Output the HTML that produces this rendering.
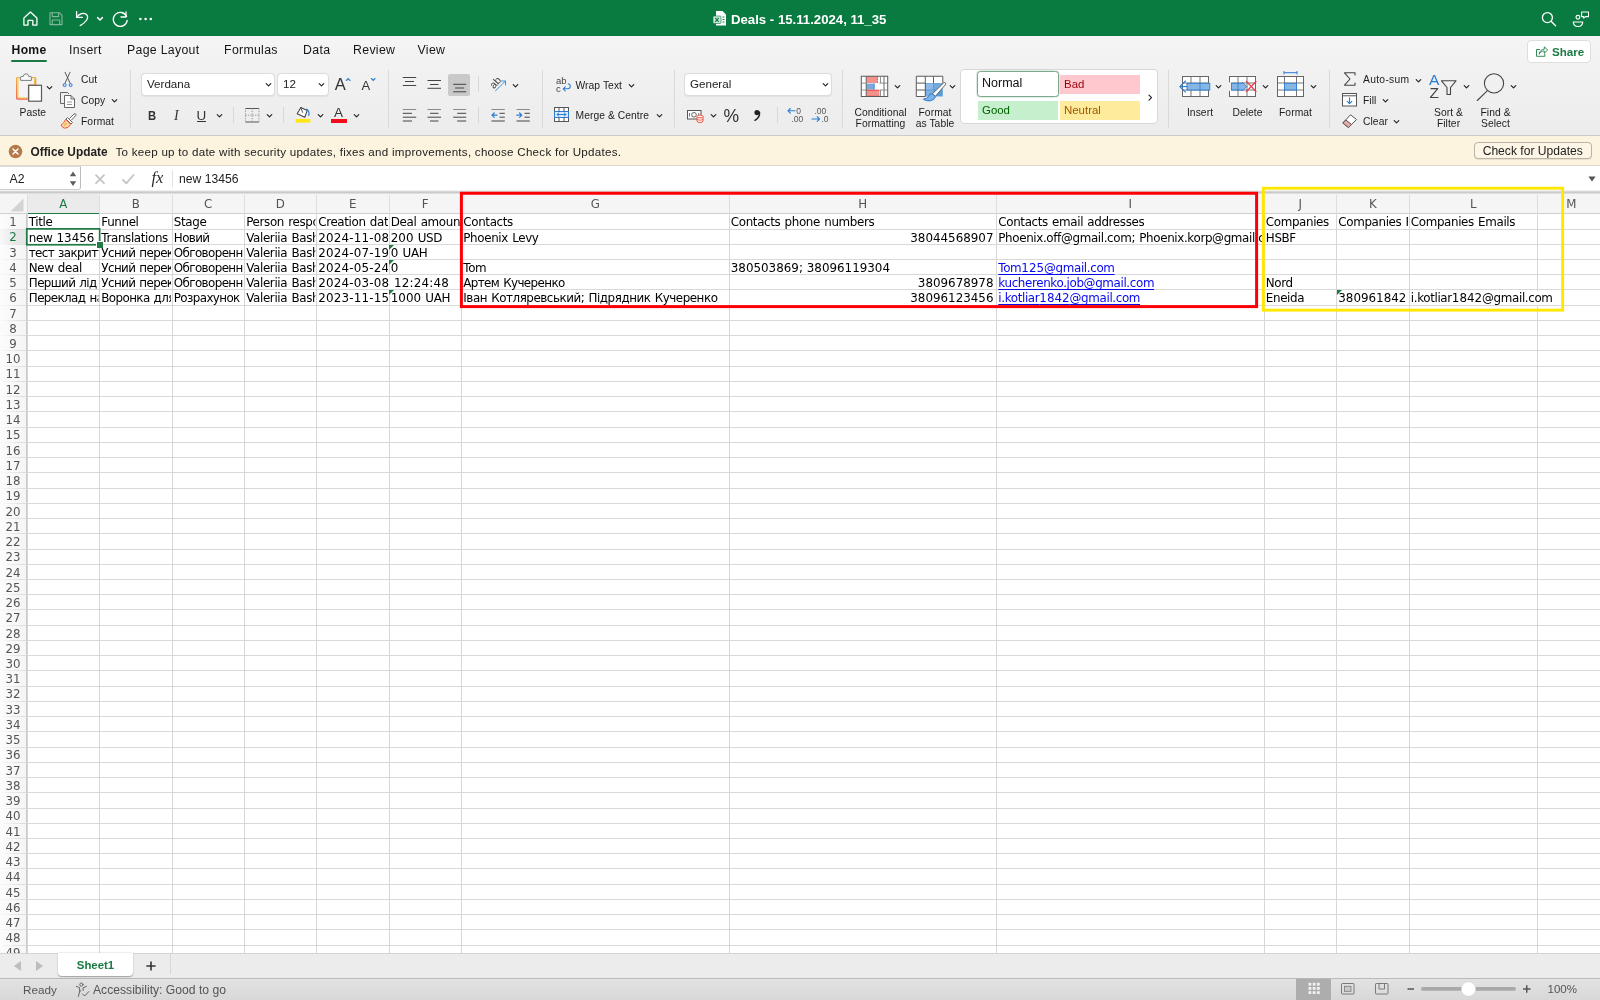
<!DOCTYPE html>
<html lang="en"><head><meta charset="utf-8"><title>Deals - 15.11.2024, 11_35</title>
<style>
*{box-sizing:border-box;margin:0;padding:0}
html,body{width:1600px;height:1000px;overflow:hidden;background:#fff}
body{will-change:transform;position:relative;font-family:"Liberation Sans",sans-serif;font-size:12.15px;color:#222;-webkit-font-smoothing:antialiased}
.abs{position:absolute}
#title{position:absolute;left:0;top:0;width:1600px;height:36px;background:#0a7b40}
#title .t{position:absolute;left:731px;top:11.600px;font-weight:bold;font-size:13.2px;color:#fff;white-space:nowrap;line-height:16px}
#tabs{position:absolute;left:0;top:36px;width:1600px;height:28px;background:linear-gradient(#f5f5f5,#f2f2f2)}
#tabs .tb{position:absolute;top:6px;margin-left:.6px;font-size:12.3px;letter-spacing:.3px;line-height:16px;color:#151515;white-space:nowrap}
#tabs .tb.on{font-weight:bold;font-size:12.2px;letter-spacing:.25px}
#ribbon{position:absolute;left:0;top:64px;width:1600px;height:72px;background:linear-gradient(#f2f2f2,#ececec);border-bottom:1px solid #c9cbce}
#rb .lb{position:absolute;white-space:nowrap;font-size:10.3px;letter-spacing:.06px;line-height:13px;color:#1d1d1d}
#rb{position:absolute;left:0;top:0;width:1600px;height:136px}
#rb .sep{position:absolute;top:70px;width:1px;height:57.500px;background:#dadada}
#rb .lb.c{width:100px;text-align:center}
#rb .lb.as{letter-spacing:.3px}
#rb .sty{font-size:12.500px;padding-left:4px;white-space:nowrap}
#rb .ssep{position:absolute;width:1px;height:16px;background:#d8d8d8}
.combo{position:absolute;background:#fff;border:1px solid #dcdcdc;border-radius:4px;font-size:11.600px;line-height:19.500px;padding-left:5px;color:#1d1d1d;box-shadow:0 0.5px 1px rgba(0,0,0,.06)}
.chev{position:absolute;width:8px;height:5px}
#upd{position:absolute;left:0;top:136px;width:1600px;height:29.5px;background:#fcf4df;border-bottom:1px solid #ddd8cb}
#upd .t1{position:absolute;left:30.5px;top:8.5px;font-weight:bold;font-size:11.85px;line-height:14px;color:#222;white-space:nowrap;-webkit-text-stroke:0}
#upd .t2{position:absolute;left:115.5px;top:8.5px;font-size:11.6px;line-height:14px;color:#222;white-space:nowrap;letter-spacing:0.26px}
#upd .btn{position:absolute;left:1473.5px;top:5.7px;width:118.5px;height:17px;border:1px solid #b9b4a6;border-radius:4px;background:#fdf6e6;font-size:12.1px;line-height:16px;text-align:center;color:#222;box-shadow:0 0.5px 0.5px rgba(0,0,0,.15)}
#fbar{position:absolute;left:0;top:165.5px;width:1600px;height:25.5px;background:#fff}
#fbar .nb{position:absolute;left:-1px;top:0;width:82px;height:24.5px;border:1px solid #d9d9d9;border-right:1.5px solid #bdbdbd;border-bottom:1px solid #cfcfcf;border-radius:0 0 3px 0}
#fbar .nbt{position:absolute;left:9.5px;top:6.2px;font-size:12.3px;line-height:14px;color:#222}
#fbar .fx{position:absolute;left:151.5px;top:3.3px;font-family:"Liberation Serif",serif;font-style:italic;font-size:16.5px;line-height:18px;color:#2a2a2a}
#fbar .ft{position:absolute;left:179px;top:6.2px;font-size:12.15px;line-height:14px;color:#222;white-space:nowrap}
#fgap{position:absolute;left:0;top:190px;width:1600px;height:4px;background:linear-gradient(#fff,#dedede 30%,#c6c6c6 55%,#d4d4d4 80%,#f0f0f0)}
#grid{position:absolute;left:0;top:0;width:1600px;height:953px;overflow:hidden;pointer-events:none}
#grid .colhdr{position:absolute;left:0;top:194px;width:1600px;height:19.5px;background:#f5f5f5;border-bottom:1px solid #cfcfcf}
#grid .colsel{position:absolute;top:194px;height:20px;background:#ebebeb;border-bottom:1.5px solid #1f7a45}
#grid .rowhdr{position:absolute;left:0;top:213.8px;width:27px;height:740px;background:linear-gradient(90deg,#fcfcfc,#f5f5f5);border-right:1px solid #c9c9c9}
#grid .rowsel{position:absolute;left:0;width:27px;background:linear-gradient(90deg,#f8f8f8,#e6e6e6 60%)}
#grid .corner{position:absolute;left:0;top:194px}
#grid .hl{position:absolute;left:27px;width:1573px;height:1px;background:#d9d9d9}
#grid .hr{position:absolute;left:0;width:27px;height:1px;background:linear-gradient(90deg,rgba(217,217,217,0),#d9d9d9)}
#grid .vl{position:absolute;top:213.5px;width:1px;height:740px;background:#d6d6d6}
#grid .vh{position:absolute;top:195px;width:1px;height:18.5px;background:#dedede}
#grid .cl{position:absolute;top:196.5px;height:15px;text-align:center;font-family:"DejaVu Sans",sans-serif;font-size:11.8px;line-height:15px;color:#555}
#grid .cl.sel{color:#1b7a43}
#grid .rn{position:absolute;left:0;width:27px;height:15.25px;text-align:center;font-family:"DejaVu Sans",sans-serif;font-size:11.8px;line-height:15.6px;color:#555;padding-right:1px}
#grid .rn.sel{color:#1b7a43}
#grid .c{position:absolute;height:15.2px;clip-path:inset(-4px 0 -4px 0);white-space:nowrap;font-family:"DejaVu Sans",sans-serif;font-size:11.9px;line-height:15.6px;color:#000;letter-spacing:-0.36px;word-spacing:.8px;padding-left:1.8px}
#grid .c b{font-weight:normal;letter-spacing:0}
#grid .c.d,#grid .c.d b{letter-spacing:.2px}
#grid .c.k{letter-spacing:-.6px}
#grid .c.k2{letter-spacing:-.45px}
#grid .c.r{text-align:right;padding-right:2px;letter-spacing:0}
#grid .c.a{color:#0808ee}
#grid .c.a span{text-decoration:underline;text-underline-offset:1.5px}
#grid .patch{position:absolute;width:2px;background:#fff}
#grid .tri{position:absolute;width:0;height:0;margin:.3px 0 0 .3px;border-top:5.5px solid #1f7a45;border-right:5.5px solid transparent}
#grid .selbox{position:absolute;border:1.7px solid #1f7a45}
#grid .selh{position:absolute;width:6.8px;height:6.5px;background:#1f7a45;border:1px solid #fff;border-right:0;border-bottom:0}
#grid .boxes{position:absolute;left:0;top:0}
#sheets{position:absolute;left:0;top:953px;width:1600px;height:25px;background:#ececec;border-top:1px solid #d4d4d4}
#sheets .tab{position:absolute;left:58px;top:-1px;width:75px;height:22.5px;background:#fff;border-radius:0 0 4px 4px;box-shadow:0 0.5px 1.5px rgba(0,0,0,.35);text-align:center;font-weight:bold;font-size:11.4px;line-height:25.5px;color:#1b7a43}
#sheets .vs{position:absolute;left:169.5px;top:0;width:1px;height:20px;background:#d8d8d8}
#status{position:absolute;left:0;top:978px;width:1600px;height:22px;background:linear-gradient(#e2e2e2,#d8d8d8);border-top:1px solid #b9b9b9}
#status .s{position:absolute;top:3.7px;font-size:12.15px;line-height:14px;color:#555;white-space:nowrap}
</style>
</head><body>
<div id="title">
<svg class="abs" style="left:0;top:0" width="160" height="36" viewBox="0 0 160 36" fill="none" stroke="#fff" stroke-width="1.3" stroke-linecap="round" stroke-linejoin="round">
<path d="M23.900 17.900 30.400 12 36.900 17.900V25.100H32.800V20.300H28V25.100H23.900Z"/>
<g stroke="#7fb898" stroke-width="1.1"><path d="M50 12.8H59.6L62 15.2V24.6H50Z"/><path d="M52.3 12.8V16.6H58.6V12.8"/><path d="M52.3 24.6V20H59.7V24.6"/></g>
<path d="M76.6 11.6V17.4H82.4"/><path d="M77 17C79.2 13.6 83.6 12 86.4 14.6 89.6 17.6 86 22.4 80.2 25.6"/>
<path d="M97.6 17.6 100 20 102.4 17.6" stroke-width="1.5"/>
<path d="M126 12V17H121"/><path d="M126.6 16.4A7 7 0 1 0 127.2 20.4"/>
<g fill="#fff" stroke="none"><circle cx="140.4" cy="19" r="1.3"/><circle cx="145.6" cy="19" r="1.3"/><circle cx="150.8" cy="19" r="1.3"/></g>
</svg>
<svg class="abs" style="left:712px;top:10px" width="16" height="17" viewBox="0 0 16 17"><path d="M4 1H10.5L14 4.5V15.5H4Z" fill="#fff"/><rect x="1" y="6" width="8" height="7.5" rx="1" fill="#cfe6d8" stroke="#0a7b40" stroke-width=".6"/><path d="M3.3 7.8 6.7 11.8M6.7 7.8 3.3 11.8" stroke="#0a7b40" stroke-width="1.1"/><path d="M10.5 7H12.5M10.5 9.5H12.5M10.5 12H12.5" stroke="#0a7b40" stroke-width=".9"/></svg>
<div class="t">Deals - 15.11.2024, 11_35</div>
<svg class="abs" style="left:1536px;top:8px" width="60" height="22" viewBox="0 0 60 22" fill="none" stroke="#fff" stroke-width="1.3" stroke-linecap="round"><circle cx="11.400" cy="9.600" r="5"/><path d="M15.100 13.300 19.600 17.800"/>
<circle cx="41.900" cy="9.200" r="1.900" stroke-width="1.150"/><path d="M37.300 14H46.700Q46.500 18.500 42 18.500 37.500 18.500 37.300 14Z" stroke-width="1.200" stroke-linejoin="round"/><path d="M45.600 3.900H52.500V8.600H49.400L47.700 10.100V8.600H45.600Z" stroke-width="1.050" stroke-linejoin="round"/></svg>
</div>
<div id="tabs">
<div class="tb on" style="left:11px">Home</div>
<div class="abs" style="left:10.5px;top:23.5px;width:36px;height:2.4px;border-radius:1.2px;background:#1b7a43"></div>
<div class="tb" style="left:68.5px">Insert</div>
<div class="tb" style="left:126.5px">Page Layout</div>
<div class="tb" style="left:223.5px">Formulas</div>
<div class="tb" style="left:302.5px">Data</div>
<div class="tb" style="left:352.5px">Review</div>
<div class="tb" style="left:417px">View</div>
<div class="abs" style="left:1527.300px;top:4.300px;width:63.500px;height:22.500px;background:#fff;border:1px solid #dedede;border-radius:4px"></div>
<svg class="abs" style="left:1535px;top:8px" width="16" height="14" viewBox="0 0 16 14" fill="none" stroke="#2a8450" stroke-width=".95" stroke-linejoin="round" stroke-linecap="round"><path d="M4.600 5.500H1.500V12.300H9.800V10"/><path d="M4.300 9.800C4.600 6.800 6.800 5.300 9.300 5.200V2.800L12.600 6 9.300 9.200V7C7.300 7 5.500 7.800 4.300 9.800Z"/></svg>
<div class="abs" style="left:1552px;top:9px;font-weight:bold;font-size:11.600px;line-height:14px;color:#1b7a43">Share</div>
</div>
<div id="ribbon"></div><div id="rb">
<svg class="abs" style="left:13px;top:70px" width="34" height="34" viewBox="0 0 34 34" ><defs><linearGradient id="pg" x1="0" y1="0" x2="0" y2="1"><stop offset="0" stop-color="#f0b03c"/><stop offset="1" stop-color="#f4614d"/></linearGradient></defs><path d="M7.500 7.700H4.400Q3.700 7.700 3.700 8.400V28.300Q3.700 29 4.400 29H15.500V15.100H22.700V8.400Q22.700 7.700 22 7.700H18.500" fill="#f6f3f8" stroke="url(#pg)" stroke-width="1.300"/><path d="M5 8.900V27.800H15" fill="none" stroke="#f6cf55" stroke-width="1"/><path d="M21.500 8.900V14.500" fill="none" stroke="#e9bb4a" stroke-width="1"/><path d="M7.600 10.400V7.200Q7.600 6.500 8.300 6.500H10.200Q10.600 3.800 13 3.800 15.400 3.800 15.800 6.500H17.700Q18.400 6.500 18.400 7.200V10.400Z" fill="#fafafa" stroke="#7d7d7d" stroke-width="1"/><rect x="15.700" y="15.300" width="12.800" height="15.900" fill="#fff" stroke="#5a5a5a" stroke-width="1.200"/></svg>
<div class="lb" style="left:19.5px;top:105.5px">Paste</div>
<svg class="abs" style="left:45.0px;top:85.2px" width="9" height="6" viewBox="0 0 9 6"><path d="M2.200 1.600 4.500 3.900 6.800 1.600" fill="none" stroke="#222" stroke-width="1.150" stroke-linecap="round" stroke-linejoin="round"/></svg>
<svg class="abs" style="left:60px;top:70px" width="16" height="18" viewBox="0 0 16 18" ><path d="M5.100 2.300 10.200 13.500M10 2.300 4.900 13.500" fill="none" stroke="#4a4a4a" stroke-width=".9" stroke-linecap="round"/><circle cx="4.600" cy="15.100" r="1.500" fill="#cfe3f7" stroke="#2b7cd3" stroke-width="1"/><circle cx="10.600" cy="15.100" r="1.500" fill="#cfe3f7" stroke="#2b7cd3" stroke-width="1"/></svg>
<div class="lb" style="left:81.0px;top:73.0px">Cut</div>
<svg class="abs" style="left:59px;top:91px" width="18" height="18" viewBox="0 0 18 18" ><path d="M5.500 12.500H1.500V1.500H8.500L10 3" fill="none" stroke="#666" stroke-width="1"/><path d="M5.500 4.500H12L15.500 8V16.500H5.500Z" fill="#fff" stroke="#666" stroke-width="1"/><path d="M12 4.500V8H15.500" fill="none" stroke="#666" stroke-width="1"/><path d="M8 11H13M8 13.500H13" stroke="#888" stroke-width=".9"/></svg>
<div class="lb" style="left:81.0px;top:94.0px">Copy</div>
<svg class="abs" style="left:110.0px;top:98.2px" width="9" height="6" viewBox="0 0 9 6"><path d="M2.200 1.600 4.500 3.900 6.800 1.600" fill="none" stroke="#222" stroke-width="1.150" stroke-linecap="round" stroke-linejoin="round"/></svg>
<svg class="abs" style="left:59px;top:112px" width="18" height="18" viewBox="0 0 18 18" ><path d="M10.500 6.500 15 2Q16 1.300 16.700 2 17.400 2.800 16.600 3.700L12.300 8.200" fill="#fff" stroke="#666" stroke-width="1"/><path d="M8.500 5.500 13.500 10.500 12 12 7 7Z" fill="#fff" stroke="#666" stroke-width="1"/><path d="M6.600 7.300 11.700 12.400Q9.500 16.500 5.500 16.200 3 15.500 2 13 5 11.500 6.600 7.300Z" fill="#f7d9a0" stroke="#ee5a48" stroke-width="1" stroke-linejoin="round"/><path d="M5 13.800 7.800 11" stroke="#f0b03c" stroke-width="1.200"/></svg>
<div class="lb" style="left:81.0px;top:115.0px">Format</div>
<div class="sep" style="left:130.0px"></div>
<div class="combo" style="left:141px;top:73.300px;width:133.800px;height:22.500px">Verdana</div>
<svg class="abs" style="left:263.5px;top:82.0px" width="9" height="6" viewBox="0 0 9 6"><path d="M2.200 1.600 4.500 3.900 6.800 1.600" fill="none" stroke="#222" stroke-width="1.150" stroke-linecap="round" stroke-linejoin="round"/></svg>
<div class="combo" style="left:277px;top:73.300px;width:51.500px;height:22.500px">12</div>
<svg class="abs" style="left:317.0px;top:82.0px" width="9" height="6" viewBox="0 0 9 6"><path d="M2.200 1.600 4.500 3.900 6.800 1.600" fill="none" stroke="#222" stroke-width="1.150" stroke-linecap="round" stroke-linejoin="round"/></svg>
<div class="abs" style="left:334.700px;top:75.300px;font-size:16.5px;line-height:18px;color:#333">A</div>
<svg class="abs" style="left:344.5px;top:76.5px" width="7" height="5" viewBox="0 0 7 5" ><path d="M1.400 3.500 3.200 1.600 5 3.500" fill="none" stroke="#2b7cd3" stroke-width="1.1" stroke-linecap="round"/></svg>
<div class="abs" style="left:361.500px;top:77.800px;font-size:13px;line-height:15px;color:#333">A</div>
<svg class="abs" style="left:369.5px;top:76.5px" width="7" height="5" viewBox="0 0 7 5" ><path d="M1.400 1.500 3.200 3.400 5 1.500" fill="none" stroke="#2b7cd3" stroke-width="1.1" stroke-linecap="round"/></svg>
<div class="abs" style="left:148px;top:107.500px;font-weight:bold;font-size:12.800px;line-height:16px;color:#333;transform:scaleX(.88);transform-origin:0 0">B</div>
<div class="abs" style="left:174px;top:107px;font-family:'Liberation Serif',serif;font-style:italic;font-size:14px;line-height:17px;color:#333">I</div>
<div class="abs" style="left:196.500px;top:107.500px;font-size:13.500px;line-height:15px;color:#333">U</div>
<div class="abs" style="left:196.500px;top:121.300px;width:9.500px;height:1.100px;background:#333"></div>
<svg class="abs" style="left:214.5px;top:113.2px" width="9" height="6" viewBox="0 0 9 6"><path d="M2.200 1.600 4.500 3.900 6.800 1.600" fill="none" stroke="#222" stroke-width="1.150" stroke-linecap="round" stroke-linejoin="round"/></svg>
<div class="ssep" style="left:232.5px;top:107.0px"></div>
<svg class="abs" style="left:244px;top:107px" width="17" height="17" viewBox="0 0 17 17" ><path d="M1.500 1.500H15M1.500 15H15" stroke="#555" stroke-width="1.100"/><path d="M1.500 1.500V15M15 1.500V15M8.200 1.500V15M1.500 8.200H15" stroke="#999" stroke-width="1" stroke-dasharray="1.200 1.200"/></svg>
<svg class="abs" style="left:265.0px;top:113.2px" width="9" height="6" viewBox="0 0 9 6"><path d="M2.200 1.600 4.500 3.900 6.800 1.600" fill="none" stroke="#222" stroke-width="1.150" stroke-linecap="round" stroke-linejoin="round"/></svg>
<div class="ssep" style="left:283.0px;top:107.0px"></div>
<svg class="abs" style="left:294px;top:104px" width="20" height="20" viewBox="0 0 20 20" ><path d="M6.800 3.600 13.200 6.600 10.800 13.300 3.200 9.700Z" fill="#fff" stroke="#444" stroke-width="1.050" stroke-linejoin="round"/><path d="M6.800 3.600 8.600 8.400" stroke="#444" stroke-width=".9" stroke-linecap="round" fill="none"/><path d="M12.500 5.200Q15.800 6.800 14.800 11.500" fill="none" stroke="#2b7cd3" stroke-width="1.200" stroke-linecap="round"/><rect x="1.600" y="14.900" width="14.800" height="3.700" fill="#ffe715"/></svg>
<svg class="abs" style="left:315.5px;top:113.2px" width="9" height="6" viewBox="0 0 9 6"><path d="M2.200 1.600 4.500 3.900 6.800 1.600" fill="none" stroke="#222" stroke-width="1.150" stroke-linecap="round" stroke-linejoin="round"/></svg>
<div class="abs" style="left:334px;top:105.300px;font-size:13.500px;line-height:15px;color:#333">A</div>
<div class="abs" style="left:331px;top:119.300px;width:15.500px;height:3.400px;background:#f10d1a"></div>
<svg class="abs" style="left:351.5px;top:113.2px" width="9" height="6" viewBox="0 0 9 6"><path d="M2.200 1.600 4.500 3.900 6.800 1.600" fill="none" stroke="#222" stroke-width="1.150" stroke-linecap="round" stroke-linejoin="round"/></svg>
<div class="sep" style="left:388.0px"></div>
<div class="abs" style="left:448px;top:73.500px;width:22px;height:22px;background:#c9c9c9;border-radius:2px"></div>
<svg class="abs" style="left:402px;top:70px" width="16" height="56" viewBox="0 0 16 56" ><path d="M0.8 7.5H14.2M3 11.5H12M0.8 15.5H14.2" stroke="#444" stroke-width="1" fill="none"/></svg>
<svg class="abs" style="left:427px;top:70px" width="16" height="56" viewBox="0 0 16 56" ><path d="M0.5 10.5H14M3 14.5H11.5M0.5 18.3H14" stroke="#444" stroke-width="1" fill="none"/></svg>
<svg class="abs" style="left:452px;top:70px" width="16" height="56" viewBox="0 0 16 56" ><path d="M1.2 14.3H14.2M3.2 18H12.2M1.2 21.8H14.2" stroke="#444" stroke-width="1" fill="none"/></svg>
<div class="ssep" style="left:478.0px;top:76.0px"></div>
<svg class="abs" style="left:488px;top:73px" width="20" height="20" viewBox="0 0 20 20" ><text transform="translate(7.300 9.600) rotate(-48)" text-anchor="middle" y="3.600" font-family="Liberation Sans, sans-serif" font-size="10.500" fill="#444">ab</text><path d="M7.500 17.800 17.300 8.200M13.500 8H17.500V12" fill="none" stroke="#3a96dd" stroke-width="1" stroke-linecap="round" stroke-linejoin="round"/></svg>
<svg class="abs" style="left:510.7px;top:82.7px" width="9" height="6" viewBox="0 0 9 6"><path d="M2.200 1.600 4.500 3.900 6.800 1.600" fill="none" stroke="#222" stroke-width="1.150" stroke-linecap="round" stroke-linejoin="round"/></svg>
<svg class="abs" style="left:402px;top:105.5px" width="16" height="18" viewBox="0 0 16 18" ><path d="M0.8 3.5H14.2" stroke="#8a8a8a" stroke-width="1" fill="none"/><path d="M0.8 7.3H10M0.8 11.2H14.2M0.8 15H10" stroke="#444" stroke-width="1" fill="none"/></svg>
<svg class="abs" style="left:427px;top:105.5px" width="16" height="18" viewBox="0 0 16 18" ><path d="M0.5 3.5H14" stroke="#8a8a8a" stroke-width="1" fill="none"/><path d="M3 7.3H11.5M0.5 11.2H14M3 15H11.5" stroke="#444" stroke-width="1" fill="none"/></svg>
<svg class="abs" style="left:452px;top:105.5px" width="16" height="18" viewBox="0 0 16 18" ><path d="M1.2 3.5H14.2" stroke="#8a8a8a" stroke-width="1" fill="none"/><path d="M5.2 7.3H14.2M1.2 11.2H14.2M5.2 15H14.2" stroke="#444" stroke-width="1" fill="none"/></svg>
<div class="ssep" style="left:478.0px;top:107.0px"></div>
<svg class="abs" style="left:490px;top:105.5px" width="16" height="18" viewBox="0 0 16 18" ><path d="M1.500 3.500H14.800" stroke="#8a8a8a" stroke-width="1"/><path d="M9.500 7.300H14.800M9.500 11.200H14.800M1.500 15H14.800" stroke="#444" stroke-width="1"/><path d="M2 9.200H7M4.200 7 2 9.200 4.200 11.400" fill="none" stroke="#2b7cd3" stroke-width="1.200" stroke-linecap="round" stroke-linejoin="round"/></svg>
<svg class="abs" style="left:515px;top:105.5px" width="16" height="18" viewBox="0 0 16 18" ><path d="M1.500 3.500H14.800" stroke="#8a8a8a" stroke-width="1"/><path d="M9.500 7.300H14.800M9.500 11.200H14.800M1.500 15H14.800" stroke="#444" stroke-width="1"/><path d="M1.800 9.200H6.800M4.600 7 6.800 9.200 4.600 11.400" fill="none" stroke="#2b7cd3" stroke-width="1.200" stroke-linecap="round" stroke-linejoin="round"/></svg>
<div class="sep" style="left:542.0px"></div>
<svg class="abs" style="left:554px;top:75px" width="20" height="20" viewBox="0 0 20 20" ><text x="2" y="8.500" font-family="Liberation Sans, sans-serif" font-size="9.500" fill="#444">ab</text><text x="2" y="16.500" font-family="Liberation Sans, sans-serif" font-size="9.500" fill="#444">c</text><path d="M14.200 8.800Q16.300 9.200 16.300 11.300 16.300 13.800 13.600 13.800H9.300M11.200 11.800 9.200 13.800 11.200 15.800" fill="none" stroke="#2b7cd3" stroke-width="1.100" stroke-linecap="round" stroke-linejoin="round"/></svg>
<div class="lb" style="left:575.5px;top:79.0px">Wrap Text</div>
<svg class="abs" style="left:626.5px;top:83.2px" width="9" height="6" viewBox="0 0 9 6"><path d="M2.200 1.600 4.500 3.900 6.800 1.600" fill="none" stroke="#222" stroke-width="1.150" stroke-linecap="round" stroke-linejoin="round"/></svg>
<svg class="abs" style="left:553px;top:106px" width="18" height="18" viewBox="0 0 18 18" ><rect x="1.500" y="1.500" width="14" height="14" fill="#fff" stroke="#555" stroke-width="1"/><rect x="1.500" y="5.500" width="14" height="6" fill="#dcebfa" stroke="#2b7cd3" stroke-width="1"/><path d="M6 1.500V5.500M11 1.500V5.500M6 11.500V15.500M11 11.500V15.500" stroke="#555" stroke-width="1"/><path d="M4 8.500H13M5.800 6.900 4 8.500 5.800 10.100M11.200 6.900 13 8.500 11.200 10.100" fill="none" stroke="#2b7cd3" stroke-width="1" stroke-linecap="round" stroke-linejoin="round"/></svg>
<div class="lb" style="left:575.5px;top:109.0px">Merge &amp; Centre</div>
<svg class="abs" style="left:654.5px;top:113.2px" width="9" height="6" viewBox="0 0 9 6"><path d="M2.200 1.600 4.500 3.900 6.800 1.600" fill="none" stroke="#222" stroke-width="1.150" stroke-linecap="round" stroke-linejoin="round"/></svg>
<div class="sep" style="left:674.0px"></div>
<div class="combo" style="left:684px;top:73.300px;width:148px;height:22.500px">General</div>
<svg class="abs" style="left:820.5px;top:82.0px" width="9" height="6" viewBox="0 0 9 6"><path d="M2.200 1.600 4.500 3.900 6.800 1.600" fill="none" stroke="#222" stroke-width="1.150" stroke-linecap="round" stroke-linejoin="round"/></svg>
<svg class="abs" style="left:686px;top:108px" width="20" height="16" viewBox="0 0 20 16" ><rect x="1.500" y="2.500" width="13.500" height="8.500" fill="#fff" stroke="#555" stroke-width="1"/><circle cx="8" cy="6.800" r="2.300" fill="none" stroke="#555" stroke-width=".9"/><path d="M3.500 5V8.500M12.700 5V8.500" stroke="#555" stroke-width=".8"/><path d="M11 8.500V13Q11 14.500 14 14.500 17 14.500 17 13V8.500" fill="#fff" stroke="#e8543f" stroke-width="1"/><ellipse cx="14" cy="8.500" rx="3" ry="1.400" fill="#fff" stroke="#e8543f" stroke-width="1"/><path d="M11 10.800Q11 12.200 14 12.200 17 12.200 17 10.800" fill="none" stroke="#e8543f" stroke-width=".9"/></svg>
<svg class="abs" style="left:708.5px;top:113.2px" width="9" height="6" viewBox="0 0 9 6"><path d="M2.200 1.600 4.500 3.900 6.800 1.600" fill="none" stroke="#222" stroke-width="1.150" stroke-linecap="round" stroke-linejoin="round"/></svg>
<div class="abs" style="left:723.500px;top:105.500px;font-size:17.500px;line-height:20px;color:#333">%</div>
<svg class="abs" style="left:752px;top:108px" width="10" height="14" viewBox="0 0 10 14" ><circle cx="5" cy="4.600" r="2.600" fill="#222"/><path d="M7.500 4.200Q8 9.500 3 12.300" fill="none" stroke="#222" stroke-width="1.500" stroke-linecap="round"/></svg>
<div class="ssep" style="left:776.5px;top:107.0px"></div>
<svg class="abs" style="left:787px;top:106px" width="17" height="18" viewBox="0 0 17 18" ><text x="9.200" y="7.800" font-family="Liberation Sans, sans-serif" font-size="8.500" fill="#555">0</text><text x="4.500" y="16" font-family="Liberation Sans, sans-serif" font-size="8.500" fill="#555">.00</text><path d="M1 4.800H8M3.300 2.500 1 4.800 3.300 7.100" fill="none" stroke="#2b7cd3" stroke-width="1.100" stroke-linecap="round" stroke-linejoin="round"/></svg>
<svg class="abs" style="left:811px;top:106px" width="18" height="18" viewBox="0 0 18 18" ><text x="3.500" y="7.800" font-family="Liberation Sans, sans-serif" font-size="8.500" fill="#555">.00</text><text x="10.500" y="16" font-family="Liberation Sans, sans-serif" font-size="8.500" fill="#555">.0</text><path d="M1 13H8.500M6.200 10.700 8.500 13 6.200 15.300" fill="none" stroke="#2b7cd3" stroke-width="1.100" stroke-linecap="round" stroke-linejoin="round"/></svg>
<div class="sep" style="left:842.0px"></div>
<svg class="abs" style="left:860px;top:75px" width="30" height="24" viewBox="0 0 30 24" ><rect x="1.300" y="1.250" width="26.400" height="20.250" fill="#fff"/><rect x="6.200" y="1.250" width="11.300" height="6.850" fill="#f3918c"/><path d="M17.500 1.250V8.100" stroke="#e8443f" stroke-width="1" stroke-dasharray="1.500 1"/><rect x="6.200" y="8.600" width="8" height="6" fill="#76abdc"/><path d="M14.200 8.600V14.600" stroke="#2b7cd3" stroke-width=".8"/><rect x="6.200" y="15" width="13.300" height="6.500" fill="#f3918c"/><path d="M6.200 15.200H19.500M6.200 21.300H19.500" stroke="#e8443f" stroke-width="1"/><rect x="1.300" y="1.250" width="26.400" height="20.250" fill="none" stroke="#5a5a5a" stroke-width="1"/><path d="M6.200 1.250V21.500M24 1.250V21.500" stroke="#5a5a5a" stroke-width=".9" fill="none"/><path d="M20.500 1.250V8.100M20.500 15V21.500M1.300 8.100H6.200M1.300 15H6.200M19.500 8.100H27.700M20 15H27.700" stroke="#777" stroke-width=".8" fill="none"/></svg>
<svg class="abs" style="left:893.0px;top:84.2px" width="9" height="6" viewBox="0 0 9 6"><path d="M2.200 1.600 4.500 3.900 6.800 1.600" fill="none" stroke="#222" stroke-width="1.150" stroke-linecap="round" stroke-linejoin="round"/></svg>
<div class="lb c" style="left:830.5px;top:105.5px">Conditional</div>
<div class="lb c" style="left:830.5px;top:116.8px">Formatting</div>
<svg class="abs" style="left:915px;top:75px" width="32" height="28" viewBox="0 0 32 28" ><rect x="1.300" y="1.250" width="26.500" height="20.250" fill="#fff"/><rect x="10.300" y="8.100" width="17.500" height="13.400" fill="#5b9bd5"/><rect x="10.800" y="8.700" width="7.300" height="5.800" fill="#8dbbe6"/><rect x="10.800" y="15.500" width="7.300" height="5.500" fill="#7fb1e1"/><rect x="19" y="8.700" width="8.300" height="5.800" fill="#74a9dd"/><path d="M1.300 21.500V1.250H27.800V8.100M1.300 21.500H10.300M10.300 1.250V21.500M18.500 1.250V8.100M1.300 8.100H10.300M1.300 15H10.300" stroke="#5a5a5a" stroke-width="1" fill="none"/><path d="M28.300 8.200Q29.600 7 30.400 7.800 31.200 8.700 30.200 9.900L20.300 21.300 17.300 19Z" fill="#fff" stroke="#5a5a5a" stroke-width=".9" stroke-linejoin="round"/><path d="M17 18.700 20.600 21.600Q19.500 25 15.500 25.800 11 26.300 8.300 24.200 12.500 23.800 13.500 21.300 14.500 18.300 17 18.700Z" fill="#7fb2e5" stroke="#2b7cd3" stroke-width="1" stroke-linejoin="round"/></svg>
<svg class="abs" style="left:948.0px;top:84.2px" width="9" height="6" viewBox="0 0 9 6"><path d="M2.200 1.600 4.500 3.900 6.800 1.600" fill="none" stroke="#222" stroke-width="1.150" stroke-linecap="round" stroke-linejoin="round"/></svg>
<div class="lb c" style="left:885.0px;top:105.5px">Format</div>
<div class="lb c" style="left:885.0px;top:116.8px">as Table</div>
<div class="abs" style="left:959.500px;top:68.800px;width:198px;height:55.700px;background:#fff;border:1px solid #d7d7d7;border-radius:4px"></div>
<div class="abs sty" style="left:976.800px;top:71.200px;width:82.200px;height:25.600px;background:#fff;border:1.400px solid #7da98f;border-radius:3.500px;box-shadow:0 0 0 .6px #c9dccf;color:#111;padding-left:4.200px;line-height:23.600px">Normal</div>
<div class="abs sty" style="left:1060px;top:75px;width:80px;height:18.800px;background:#ffc7ce;color:#9c0006;line-height:18.500px;font-size:11.450px">Bad</div>
<div class="abs sty" style="left:978px;top:101.200px;width:80px;height:18.800px;background:#c6efce;color:#006100;line-height:18px;font-size:11.450px">Good</div>
<div class="abs sty" style="left:1060px;top:101.200px;width:80px;height:18.800px;background:#ffeb9c;color:#9c5700;line-height:18px;font-size:11.450px">Neutral</div>
<svg class="abs" style="left:1147px;top:92.5px" width="7" height="10" viewBox="0 0 7 10" ><path d="M2 2.200 4.500 4.700 2 7.200" fill="none" stroke="#222" stroke-width="1.200" stroke-linecap="round" stroke-linejoin="round"/></svg>
<div class="sep" style="left:1168.0px"></div>
<svg class="abs" style="left:1178px;top:74px" width="34" height="26" viewBox="0 0 34 26" ><rect x="4.500" y="2.500" width="26" height="20" fill="#fff" stroke="#666" stroke-width="1"/><path d="M13 2.500V22.500M22 2.500V22.500M4.500 9H30.500M4.500 16H30.500" stroke="#666" stroke-width=".9"/><rect x="9" y="9.300" width="22.800" height="6.700" fill="#86b6e3" stroke="#2b7cd3" stroke-width=".9"/><path d="M22 9.300V16" stroke="#2b7cd3" stroke-width=".8"/><path d="M7.500 7 1.800 12.600 7.500 18.200" fill="none" stroke="#2b7cd3" stroke-width="1.100" stroke-linecap="round" stroke-linejoin="round"/><path d="M2.500 12.600H9" stroke="#2b7cd3" stroke-width="1.100"/></svg>
<svg class="abs" style="left:1213.5px;top:84.2px" width="9" height="6" viewBox="0 0 9 6"><path d="M2.200 1.600 4.500 3.900 6.800 1.600" fill="none" stroke="#222" stroke-width="1.150" stroke-linecap="round" stroke-linejoin="round"/></svg>
<div class="lb c" style="left:1150.0px;top:105.5px">Insert</div>
<svg class="abs" style="left:1228px;top:74px" width="32" height="26" viewBox="0 0 32 26" ><rect x="1.500" y="2.500" width="26" height="20" fill="#fff" stroke="#666" stroke-width="1"/><path d="M10 2.500V22.500M19 2.500V22.500M1.500 9H27.500M1.500 16H27.500" stroke="#666" stroke-width=".9"/><rect x="0" y="8.300" width="3" height="8.600" fill="#f0f0f0"/><path d="M3.500 9.300H14.500V8.300L18.800 12.600 14.500 16.900V16H3.500Z" fill="#86b6e3" stroke="#2b7cd3" stroke-width=".9" stroke-linejoin="round"/><path d="M10 9.300V16" stroke="#2b7cd3" stroke-width=".8"/><rect x="17" y="7" width="12" height="11" fill="#fff" opacity=".0"/><path d="M18.500 7.500 28 17.500M28 7.500 18.500 17.500" stroke="#e8404a" stroke-width="1.200" stroke-linecap="round"/></svg>
<svg class="abs" style="left:1261.0px;top:84.2px" width="9" height="6" viewBox="0 0 9 6"><path d="M2.200 1.600 4.500 3.900 6.800 1.600" fill="none" stroke="#222" stroke-width="1.150" stroke-linecap="round" stroke-linejoin="round"/></svg>
<div class="lb c" style="left:1197.5px;top:105.5px">Delete</div>
<svg class="abs" style="left:1275px;top:69px" width="32" height="30" viewBox="0 0 32 30" ><rect x="2.500" y="7.500" width="26" height="20" fill="#fff" stroke="#666" stroke-width="1"/><path d="M9.500 7.500V27.500M21.500 7.500V27.500M2.500 14H28.500M2.500 21H28.500" stroke="#666" stroke-width=".9"/><rect x="9.500" y="14.300" width="12" height="6.700" fill="#86b6e3" stroke="#2b7cd3" stroke-width=".9"/><path d="M9 3.700H22M9 2V5.400M22 2V5.400" stroke="#2b7cd3" stroke-width="1"/></svg>
<svg class="abs" style="left:1308.5px;top:84.2px" width="9" height="6" viewBox="0 0 9 6"><path d="M2.200 1.600 4.500 3.900 6.800 1.600" fill="none" stroke="#222" stroke-width="1.150" stroke-linecap="round" stroke-linejoin="round"/></svg>
<div class="lb c" style="left:1245.5px;top:105.5px">Format</div>
<div class="sep" style="left:1329.0px"></div>
<svg class="abs" style="left:1342px;top:71px" width="16" height="16" viewBox="0 0 16 16" ><path d="M13 4V1.800H2.500L8 8 2.500 14.200H13V12" fill="none" stroke="#444" stroke-width="1.100" stroke-linejoin="round" stroke-linecap="round"/></svg>
<div class="lb as" style="left:1363.0px;top:73.0px">Auto-sum</div>
<svg class="abs" style="left:1414.0px;top:77.7px" width="9" height="6" viewBox="0 0 9 6"><path d="M2.200 1.600 4.500 3.900 6.800 1.600" fill="none" stroke="#222" stroke-width="1.150" stroke-linecap="round" stroke-linejoin="round"/></svg>
<svg class="abs" style="left:1341px;top:92px" width="18" height="16" viewBox="0 0 18 16" ><rect x="1.500" y="1.500" width="14" height="12.500" fill="#fff" stroke="#555" stroke-width="1"/><path d="M1.500 3.800H15.500" stroke="#555" stroke-width="1"/><path d="M8.500 5.800V11.500M6.200 9.300 8.500 11.600 10.800 9.300" fill="none" stroke="#2b7cd3" stroke-width="1.100" stroke-linecap="round" stroke-linejoin="round"/></svg>
<div class="lb" style="left:1363.0px;top:94.0px">Fill</div>
<svg class="abs" style="left:1381.0px;top:98.2px" width="9" height="6" viewBox="0 0 9 6"><path d="M2.200 1.600 4.500 3.900 6.800 1.600" fill="none" stroke="#222" stroke-width="1.150" stroke-linecap="round" stroke-linejoin="round"/></svg>
<svg class="abs" style="left:1341px;top:113px" width="18" height="16" viewBox="0 0 18 16" ><path d="M9.500 1.800 15.500 6.500 7.500 14.500 1.800 10Z" fill="#fff" stroke="#555" stroke-width="1" stroke-linejoin="round"/><path d="M4.800 7 10.600 11.500 7.500 14.500 1.800 10Z" fill="#e8a9ab" stroke="#555" stroke-width="1" stroke-linejoin="round"/></svg>
<div class="lb" style="left:1363.0px;top:115.0px">Clear</div>
<svg class="abs" style="left:1392.0px;top:119.2px" width="9" height="6" viewBox="0 0 9 6"><path d="M2.200 1.600 4.500 3.900 6.800 1.600" fill="none" stroke="#222" stroke-width="1.150" stroke-linecap="round" stroke-linejoin="round"/></svg>
<div class="abs" style="left:1429px;top:72px;font-size:15.500px;line-height:16px;color:#2b7cd3">A</div>
<div class="abs" style="left:1429.500px;top:85px;font-size:15.500px;line-height:16px;color:#444">Z</div>
<svg class="abs" style="left:1440px;top:79px" width="18" height="18" viewBox="0 0 18 18" ><path d="M1.500 1.800H16L10.500 8.500V15.500L7 15.500V8.500Z" fill="none" stroke="#444" stroke-width="1.100" stroke-linejoin="round"/></svg>
<svg class="abs" style="left:1461.5px;top:84.2px" width="9" height="6" viewBox="0 0 9 6"><path d="M2.200 1.600 4.500 3.900 6.800 1.600" fill="none" stroke="#222" stroke-width="1.150" stroke-linecap="round" stroke-linejoin="round"/></svg>
<div class="lb c" style="left:1398.5px;top:105.5px">Sort &amp;</div>
<div class="lb c" style="left:1398.5px;top:116.8px">Filter</div>
<svg class="abs" style="left:1474px;top:70px" width="32" height="34" viewBox="0 0 32 34" ><circle cx="20" cy="13.400" r="9.600" fill="none" stroke="#444" stroke-width="1.100"/><path d="M13.400 20.600 3.300 30.500" stroke="#444" stroke-width="1.100" stroke-linecap="round"/></svg>
<svg class="abs" style="left:1509.0px;top:84.2px" width="9" height="6" viewBox="0 0 9 6"><path d="M2.200 1.600 4.500 3.900 6.800 1.600" fill="none" stroke="#222" stroke-width="1.150" stroke-linecap="round" stroke-linejoin="round"/></svg>
<div class="lb c" style="left:1445.5px;top:105.5px">Find &amp;</div>
<div class="lb c" style="left:1445.5px;top:116.8px">Select</div>
</div>
<div id="upd">
<svg class="abs" style="left:7.5px;top:7.5px" width="15" height="15" viewBox="0 0 15 15"><circle cx="7.5" cy="7.5" r="6.8" fill="#b5794a"/><path d="M5 5 10 10M10 5 5 10" stroke="#fff" stroke-width="1.5" stroke-linecap="round"/></svg>
<div class="t1">Office Update</div>
<div class="t2">To keep up to date with security updates, fixes and improvements, choose Check for Updates.</div>
<div class="btn">Check for Updates</div>
</div>
<div id="fbar">
<div class="nb"></div>
<div class="nbt">A2</div>
<svg class="abs" style="left:67px;top:4.500px" width="12" height="18" viewBox="0 0 12 18" fill="#5c5c5c"><path d="M6 1.400 9.200 6.200H2.800Z"/><path d="M6 16 9.200 11.200H2.800Z"/></svg>
<svg class="abs" style="left:92px;top:5px" width="50" height="16" viewBox="0 0 50 16" fill="none" stroke="#c4c4c4" stroke-width="1.800" stroke-linecap="round" stroke-linejoin="round"><path d="M4 4.200 12 12.200M12 4.200 4 12.200"/><path d="M31 9 34.300 12.300 41.500 4"/></svg>
<div class="fx">fx</div>
<div class="abs" style="left:171.5px;top:4px;width:1px;height:17px;background:#e2e2e2"></div>
<div class="ft">new 13456</div>
<svg class="abs" style="left:1587px;top:9px" width="10" height="8" viewBox="0 0 10 8"><path d="M1.4 1.4H8.6L5 6.4Z" fill="#555"/></svg>
</div>
<div id="fgap"></div>
<div id="grid">
<div class="colhdr"></div>
<div class="colsel" style="left:27.0px;width:72.5px"></div>
<div class="rowhdr"></div>
<div class="rowsel" style="top:229.04px;height:15.24px"></div>
<svg class="corner" width="27" height="20" viewBox="0 0 27 20"><path d="M23.5 4.5V17.5H10.5Z" fill="#d3d3d3"/></svg>
<div class="hl" style="top:228.54px"></div><div class="hr" style="top:228.54px"></div>
<div class="hl" style="top:243.77px"></div><div class="hr" style="top:243.77px"></div>
<div class="hl" style="top:259.01px"></div><div class="hr" style="top:259.01px"></div>
<div class="hl" style="top:274.25px"></div><div class="hr" style="top:274.25px"></div>
<div class="hl" style="top:289.49px"></div><div class="hr" style="top:289.49px"></div>
<div class="hl" style="top:304.72px"></div><div class="hr" style="top:304.72px"></div>
<div class="hl" style="top:319.96px"></div><div class="hr" style="top:319.96px"></div>
<div class="hl" style="top:335.20px"></div><div class="hr" style="top:335.20px"></div>
<div class="hl" style="top:350.43px"></div><div class="hr" style="top:350.43px"></div>
<div class="hl" style="top:365.67px"></div><div class="hr" style="top:365.67px"></div>
<div class="hl" style="top:380.91px"></div><div class="hr" style="top:380.91px"></div>
<div class="hl" style="top:396.14px"></div><div class="hr" style="top:396.14px"></div>
<div class="hl" style="top:411.38px"></div><div class="hr" style="top:411.38px"></div>
<div class="hl" style="top:426.62px"></div><div class="hr" style="top:426.62px"></div>
<div class="hl" style="top:441.86px"></div><div class="hr" style="top:441.86px"></div>
<div class="hl" style="top:457.09px"></div><div class="hr" style="top:457.09px"></div>
<div class="hl" style="top:472.33px"></div><div class="hr" style="top:472.33px"></div>
<div class="hl" style="top:487.57px"></div><div class="hr" style="top:487.57px"></div>
<div class="hl" style="top:502.80px"></div><div class="hr" style="top:502.80px"></div>
<div class="hl" style="top:518.04px"></div><div class="hr" style="top:518.04px"></div>
<div class="hl" style="top:533.28px"></div><div class="hr" style="top:533.28px"></div>
<div class="hl" style="top:548.51px"></div><div class="hr" style="top:548.51px"></div>
<div class="hl" style="top:563.75px"></div><div class="hr" style="top:563.75px"></div>
<div class="hl" style="top:578.99px"></div><div class="hr" style="top:578.99px"></div>
<div class="hl" style="top:594.23px"></div><div class="hr" style="top:594.23px"></div>
<div class="hl" style="top:609.46px"></div><div class="hr" style="top:609.46px"></div>
<div class="hl" style="top:624.70px"></div><div class="hr" style="top:624.70px"></div>
<div class="hl" style="top:639.94px"></div><div class="hr" style="top:639.94px"></div>
<div class="hl" style="top:655.17px"></div><div class="hr" style="top:655.17px"></div>
<div class="hl" style="top:670.41px"></div><div class="hr" style="top:670.41px"></div>
<div class="hl" style="top:685.65px"></div><div class="hr" style="top:685.65px"></div>
<div class="hl" style="top:700.88px"></div><div class="hr" style="top:700.88px"></div>
<div class="hl" style="top:716.12px"></div><div class="hr" style="top:716.12px"></div>
<div class="hl" style="top:731.36px"></div><div class="hr" style="top:731.36px"></div>
<div class="hl" style="top:746.60px"></div><div class="hr" style="top:746.60px"></div>
<div class="hl" style="top:761.83px"></div><div class="hr" style="top:761.83px"></div>
<div class="hl" style="top:777.07px"></div><div class="hr" style="top:777.07px"></div>
<div class="hl" style="top:792.31px"></div><div class="hr" style="top:792.31px"></div>
<div class="hl" style="top:807.54px"></div><div class="hr" style="top:807.54px"></div>
<div class="hl" style="top:822.78px"></div><div class="hr" style="top:822.78px"></div>
<div class="hl" style="top:838.02px"></div><div class="hr" style="top:838.02px"></div>
<div class="hl" style="top:853.25px"></div><div class="hr" style="top:853.25px"></div>
<div class="hl" style="top:868.49px"></div><div class="hr" style="top:868.49px"></div>
<div class="hl" style="top:883.73px"></div><div class="hr" style="top:883.73px"></div>
<div class="hl" style="top:898.96px"></div><div class="hr" style="top:898.96px"></div>
<div class="hl" style="top:914.20px"></div><div class="hr" style="top:914.20px"></div>
<div class="hl" style="top:929.44px"></div><div class="hr" style="top:929.44px"></div>
<div class="hl" style="top:944.68px"></div><div class="hr" style="top:944.68px"></div>
<div class="vl" style="left:26.5px"></div><div class="vh" style="left:26.5px"></div>
<div class="vl" style="left:99.0px"></div><div class="vh" style="left:99.0px"></div>
<div class="vl" style="left:171.5px"></div><div class="vh" style="left:171.5px"></div>
<div class="vl" style="left:243.9px"></div><div class="vh" style="left:243.9px"></div>
<div class="vl" style="left:315.9px"></div><div class="vh" style="left:315.9px"></div>
<div class="vl" style="left:388.5px"></div><div class="vh" style="left:388.5px"></div>
<div class="vl" style="left:461.0px"></div><div class="vh" style="left:461.0px"></div>
<div class="vl" style="left:728.5px"></div><div class="vh" style="left:728.5px"></div>
<div class="vl" style="left:996.0px"></div><div class="vh" style="left:996.0px"></div>
<div class="vl" style="left:1263.5px"></div><div class="vh" style="left:1263.5px"></div>
<div class="vl" style="left:1336.0px"></div><div class="vh" style="left:1336.0px"></div>
<div class="vl" style="left:1408.5px"></div><div class="vh" style="left:1408.5px"></div>
<div class="vl" style="left:1537.0px"></div><div class="vh" style="left:1537.0px"></div>
<div class="patch" style="left:388.0px;top:275.35px;height:14.04px"></div>
<div class="patch" style="left:1536.5px;top:290.59px;height:14.04px"></div>
<div class="cl sel" style="left:27.0px;width:72.5px">A</div>
<div class="cl" style="left:99.5px;width:72.5px">B</div>
<div class="cl" style="left:172.0px;width:72.4px">C</div>
<div class="cl" style="left:244.4px;width:72.0px">D</div>
<div class="cl" style="left:316.4px;width:72.6px">E</div>
<div class="cl" style="left:389.0px;width:72.5px">F</div>
<div class="cl" style="left:461.5px;width:267.5px">G</div>
<div class="cl" style="left:729.0px;width:267.5px">H</div>
<div class="cl" style="left:996.5px;width:267.5px">I</div>
<div class="cl" style="left:1264.0px;width:72.5px">J</div>
<div class="cl" style="left:1336.5px;width:72.5px">K</div>
<div class="cl" style="left:1409.0px;width:128.5px">L</div>
<div class="cl" style="left:1537.5px;width:67.5px">M</div>
<div class="rn" style="top:215.10px">1</div>
<div class="rn sel" style="top:230.34px">2</div>
<div class="rn" style="top:245.57px">3</div>
<div class="rn" style="top:260.81px">4</div>
<div class="rn" style="top:276.05px">5</div>
<div class="rn" style="top:291.29px">6</div>
<div class="rn" style="top:306.52px">7</div>
<div class="rn" style="top:321.76px">8</div>
<div class="rn" style="top:337.00px">9</div>
<div class="rn" style="top:352.23px">10</div>
<div class="rn" style="top:367.47px">11</div>
<div class="rn" style="top:382.71px">12</div>
<div class="rn" style="top:397.94px">13</div>
<div class="rn" style="top:413.18px">14</div>
<div class="rn" style="top:428.42px">15</div>
<div class="rn" style="top:443.66px">16</div>
<div class="rn" style="top:458.89px">17</div>
<div class="rn" style="top:474.13px">18</div>
<div class="rn" style="top:489.37px">19</div>
<div class="rn" style="top:504.60px">20</div>
<div class="rn" style="top:519.84px">21</div>
<div class="rn" style="top:535.08px">22</div>
<div class="rn" style="top:550.31px">23</div>
<div class="rn" style="top:565.55px">24</div>
<div class="rn" style="top:580.79px">25</div>
<div class="rn" style="top:596.02px">26</div>
<div class="rn" style="top:611.26px">27</div>
<div class="rn" style="top:626.50px">28</div>
<div class="rn" style="top:641.74px">29</div>
<div class="rn" style="top:656.97px">30</div>
<div class="rn" style="top:672.21px">31</div>
<div class="rn" style="top:687.45px">32</div>
<div class="rn" style="top:702.68px">33</div>
<div class="rn" style="top:717.92px">34</div>
<div class="rn" style="top:733.16px">35</div>
<div class="rn" style="top:748.39px">36</div>
<div class="rn" style="top:763.63px">37</div>
<div class="rn" style="top:778.87px">38</div>
<div class="rn" style="top:794.11px">39</div>
<div class="rn" style="top:809.34px">40</div>
<div class="rn" style="top:824.58px">41</div>
<div class="rn" style="top:839.82px">42</div>
<div class="rn" style="top:855.05px">43</div>
<div class="rn" style="top:870.29px">44</div>
<div class="rn" style="top:885.53px">45</div>
<div class="rn" style="top:900.76px">46</div>
<div class="rn" style="top:916.00px">47</div>
<div class="rn" style="top:931.24px">48</div>
<div class="rn" style="top:946.48px">49</div>
<div class="c" style="left:27.0px;top:215.30px;width:71.5px"><span>Title</span></div>
<div class="c" style="left:99.5px;top:215.30px;width:71.5px"><span>Funnel</span></div>
<div class="c" style="left:172.0px;top:215.30px;width:71.4px"><span>Stage</span></div>
<div class="c" style="left:244.4px;top:215.30px;width:71.0px"><span>Person respo</span></div>
<div class="c" style="left:316.4px;top:215.30px;width:71.6px"><span>Creation dat</span></div>
<div class="c" style="left:389.0px;top:215.30px;width:71.5px"><span>Deal amoun</span></div>
<div class="c" style="left:461.5px;top:215.30px;width:266.5px"><span>Contacts</span></div>
<div class="c" style="left:729.0px;top:215.30px;width:266.5px"><span>Contacts phone numbers</span></div>
<div class="c" style="left:996.5px;top:215.30px;width:266.5px"><span>Contacts email addresses</span></div>
<div class="c" style="left:1264.0px;top:215.30px;width:71.5px"><span>Companies</span></div>
<div class="c" style="left:1336.5px;top:215.30px;width:71.5px"><span>Companies P</span></div>
<div class="c" style="left:1409.0px;top:215.30px;width:127.5px"><span>Companies Emails</span></div>
<div class="c" style="left:27.0px;top:230.54px;width:71.5px"><span>new <b>13456</b></span></div>
<div class="c" style="left:99.5px;top:230.54px;width:71.5px"><span>Translations</span></div>
<div class="c k" style="left:172.0px;top:230.54px;width:71.4px"><span>Новий</span></div>
<div class="c" style="left:244.4px;top:230.54px;width:71.0px"><span>Valeriia Bash</span></div>
<div class="c d" style="left:316.4px;top:230.54px;width:71.6px"><span><b>2024-11-08</b></span></div>
<div class="c" style="left:389.0px;top:230.54px;width:71.5px"><span><b>200</b> USD</span></div>
<div class="c" style="left:461.5px;top:230.54px;width:266.5px"><span>Phoenix Levy</span></div>
<div class="c r" style="left:729.0px;top:230.54px;width:266.5px"><span><b>38044568907</b></span></div>
<div class="c" style="left:996.5px;top:230.54px;width:266.5px"><span>Phoenix.off@gmail.com; Phoenix.korp@gmail.c</span></div>
<div class="c" style="left:1264.0px;top:230.54px;width:71.5px"><span>HSBF</span></div>
<div class="c k" style="left:27.0px;top:245.77px;width:71.5px"><span>тест закритт</span></div>
<div class="c k" style="left:99.5px;top:245.77px;width:71.5px"><span>Усний перек</span></div>
<div class="c k" style="left:172.0px;top:245.77px;width:71.4px"><span>Обговоренн</span></div>
<div class="c" style="left:244.4px;top:245.77px;width:71.0px"><span>Valeriia Bash</span></div>
<div class="c d" style="left:316.4px;top:245.77px;width:71.6px"><span><b>2024-07-19</b></span></div>
<div class="c" style="left:389.0px;top:245.77px;width:71.5px"><span><b>0</b> UAH</span></div>
<div class="c" style="left:27.0px;top:261.01px;width:71.5px"><span>New deal</span></div>
<div class="c k" style="left:99.5px;top:261.01px;width:71.5px"><span>Усний перек</span></div>
<div class="c k" style="left:172.0px;top:261.01px;width:71.4px"><span>Обговоренн</span></div>
<div class="c" style="left:244.4px;top:261.01px;width:71.0px"><span>Valeriia Bash</span></div>
<div class="c d" style="left:316.4px;top:261.01px;width:71.6px"><span><b>2024-05-24</b></span></div>
<div class="c" style="left:389.0px;top:261.01px;width:71.5px"><span><b>0</b></span></div>
<div class="c" style="left:461.5px;top:261.01px;width:266.5px"><span>Tom</span></div>
<div class="c" style="left:729.0px;top:261.01px;width:266.5px"><span><b>380503869</b>; <b>38096119304</b></span></div>
<div class="c a" style="left:996.5px;top:261.01px;width:266.5px"><span>Tom<b>125</b>@gmail.com</span></div>
<div class="c k" style="left:27.0px;top:276.25px;width:71.5px"><span>Перший лід</span></div>
<div class="c k" style="left:99.5px;top:276.25px;width:71.5px"><span>Усний перек</span></div>
<div class="c k" style="left:172.0px;top:276.25px;width:71.4px"><span>Обговоренн</span></div>
<div class="c" style="left:244.4px;top:276.25px;width:71.0px"><span>Valeriia Bash</span></div>
<div class="c d" style="left:316.4px;top:276.25px;width:144.1px"><span><b>2024-03-08</b> <b>12:24:48</b></span></div>
<div class="c k" style="left:461.5px;top:276.25px;width:266.5px"><span>Артем Кучеренко</span></div>
<div class="c r" style="left:729.0px;top:276.25px;width:266.5px"><span><b>3809678978</b></span></div>
<div class="c a" style="left:996.5px;top:276.25px;width:266.5px"><span>kucherenko.job@gmail.com</span></div>
<div class="c" style="left:1264.0px;top:276.25px;width:71.5px"><span>Nord</span></div>
<div class="c k" style="left:27.0px;top:291.49px;width:71.5px"><span>Переклад на</span></div>
<div class="c k" style="left:99.5px;top:291.49px;width:71.5px"><span>Воронка для</span></div>
<div class="c k" style="left:172.0px;top:291.49px;width:71.4px"><span>Розрахунок</span></div>
<div class="c" style="left:244.4px;top:291.49px;width:71.0px"><span>Valeriia Bash</span></div>
<div class="c d" style="left:316.4px;top:291.49px;width:71.6px"><span><b>2023-11-15</b></span></div>
<div class="c" style="left:389.0px;top:291.49px;width:71.5px"><span><b>1000</b> UAH</span></div>
<div class="c k2" style="left:461.5px;top:291.49px;width:266.5px"><span>Іван Котляревський; Підрядник Кучеренко</span></div>
<div class="c r" style="left:729.0px;top:291.49px;width:266.5px"><span><b>38096123456</b></span></div>
<div class="c a" style="left:996.5px;top:291.49px;width:266.5px"><span>i.kotliar<b>1842</b>@gmail.com</span></div>
<div class="c" style="left:1264.0px;top:291.49px;width:71.5px"><span>Eneida</span></div>
<div class="c" style="left:1336.5px;top:291.49px;width:71.5px"><span><b>380961842</b></span></div>
<div class="c" style="left:1409.0px;top:291.49px;width:160.0px"><span>i.kotliar<b>1842</b>@gmail.com</span></div>
<div class="tri" style="left:389.0px;top:244.27px"></div>
<div class="tri" style="left:389.0px;top:259.51px"></div>
<div class="tri" style="left:389.0px;top:289.99px"></div>
<div class="tri" style="left:1336.5px;top:289.99px"></div>
<svg class="boxes" width="1600" height="330" viewBox="0 0 1600 330" fill="none"><rect x="26.75" y="228.85" width="72.9" height="15.9" stroke="#1f7a45" stroke-width="1.7"/><rect x="461.4" y="193.25" width="795.2" height="113.35" stroke="#fd0005" stroke-width="3"/><rect x="1263.35" y="188.2" width="299.3" height="121.95" stroke="#ffe800" stroke-width="2.9"/></svg>
<div class="selh" style="left:96.2px;top:241.30px"></div>
</div>
<div id="sheets">
<svg class="abs" style="left:10px;top:5px" width="40" height="14" viewBox="0 0 40 14" fill="#bdbdbd"><path d="M11 2V12L4 7Z"/><path d="M26 2V12L33 7Z"/></svg>
<div class="tab">Sheet1</div>
<svg class="abs" style="left:144px;top:5px" width="14" height="14" viewBox="0 0 14 14" stroke="#333" stroke-width="1.6" fill="none"><path d="M7 2.4V11.6M2.4 7H11.6"/></svg>
<div class="vs"></div>
</div>
<div id="status">
<div class="s" style="left:23px;font-size:11.7px">Ready</div>
<svg class="abs" style="left:74px;top:2px" width="18" height="18" viewBox="0 0 18 18" fill="none" stroke="#666" stroke-width="1" stroke-linecap="round" stroke-linejoin="round"><circle cx="7.4" cy="3.6" r="1.6"/><path d="M2.4 5.4 5.6 6.6V10.6L4.4 15.4M12.4 5.4 9.2 6.6V9.4"/><path d="M5.6 10.6 7 9.6"/><path d="M8.6 13 10.6 15 14.8 10.6"/></svg>
<div class="s" style="left:93px">Accessibility: Good to go</div>
<div class="abs" style="left:1296px;top:0;width:35px;height:21px;background:#adadad"></div>
<svg class="abs" style="left:1300px;top:1.400px" width="100" height="18" viewBox="0 0 100 18" fill="none" stroke="#7a7a7a" stroke-width="1">
<g fill="#f2f2f2" stroke="none"><rect x="8.500" y="2.800" width="2.800" height="2.800"/><rect x="12.700" y="2.800" width="2.800" height="2.800"/><rect x="16.900" y="2.800" width="2.800" height="2.800"/><rect x="8.500" y="7" width="2.800" height="2.800"/><rect x="12.700" y="7" width="2.800" height="2.800"/><rect x="16.900" y="7" width="2.800" height="2.800"/><rect x="8.500" y="11.200" width="2.800" height="2.800"/><rect x="12.700" y="11.200" width="2.800" height="2.800"/><rect x="16.900" y="11.200" width="2.800" height="2.800"/></g>
<rect x="41.500" y="3.500" width="12.500" height="10.500" rx=".8"/><rect x="44.500" y="6.300" width="6.500" height="5" fill="#c9c9c9" stroke-width=".8"/>
<rect x="75.500" y="3.500" width="12.500" height="10.500" rx=".8"/><path d="M79 3.500V9H84.500V3.500"/>
</svg>
<svg class="abs" style="left:1400px;top:1.400px" width="140" height="18" viewBox="0 0 140 18"><path d="M7.500 9H14" stroke="#555" stroke-width="1.500"/><rect x="21" y="7" width="95" height="3.800" rx="1.900" fill="#a9a9a9"/><circle cx="68.500" cy="9" r="7.300" fill="#fff" stroke="#c8c8c8" stroke-width=".5"/><path d="M123 9H130.500M126.750 5.200V12.800" stroke="#555" stroke-width="1.500"/></svg>
<div class="s" style="left:1547.5px;font-size:11.5px;margin-top:-.5px">100%</div>
</div>
</body></html>
